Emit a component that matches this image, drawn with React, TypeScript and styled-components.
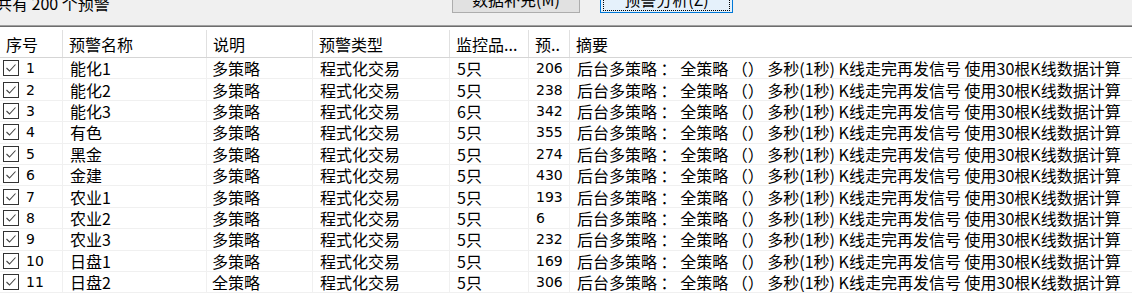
import styled, { createGlobalStyle } from 'styled-components'

const GlobalStyle = createGlobalStyle`
  html, body {
    margin: 0;
    padding: 0;
    background: #f0f0f0;
    overflow: hidden;
  }
  body {
    font-family: "Noto Sans CJK SC", "Liberation Sans", sans-serif;
    font-size: 16px;
    color: #000;
  }
`

const rows = [
  ['1', '能化1', '多策略', '5只', '206'],
  ['2', '能化2', '多策略', '5只', '238'],
  ['3', '能化3', '多策略', '6只', '342'],
  ['4', '有色', '多策略', '5只', '355'],
  ['5', '黑金', '多策略', '5只', '274'],
  ['6', '金建', '多策略', '5只', '430'],
  ['7', '农业1', '多策略', '5只', '193'],
  ['8', '农业2', '多策略', '5只', '6'],
  ['9', '农业3', '多策略', '5只', '232'],
  ['10', '日盘1', '多策略', '5只', '169'],
  ['11', '日盘2', '全策略', '5只', '306'],
]

const summary = '后台多策略 ： 全策略 （） 多秒(1秒) K线走完再发信号 使用30根K线数据计算'

const cols = '63px 144px 106px 137px 79px 41px 1fr'

export default function App() {
  return (
    <Root>
      <GlobalStyle />
      <Toolbar>
        <Count>共有 200 个预警</Count>
        <Button>数据补充(M)</Button>
        <Button $focused>
          <FocusRing>预警分析(Z)</FocusRing>
        </Button>
      </Toolbar>
      <List>
        <Header>
          <HeadCell>序号</HeadCell>
          <HeadCell>预警名称</HeadCell>
          <HeadCell>说明</HeadCell>
          <HeadCell>预警类型</HeadCell>
          <HeadCell>监控品...</HeadCell>
          <HeadCell>预..</HeadCell>
          <HeadCell $last>摘要</HeadCell>
        </Header>
        {rows.map(([no, name, desc, qty, count]) => (
          <Row key={no}>
            <Cell $pad={3}>
              <CheckBox />
              <Num>{no}</Num>
            </Cell>
            <Cell>{name}</Cell>
            <Cell $pad={5}>{desc}</Cell>
            <Cell>程式化交易</Cell>
            <Cell>{qty}</Cell>
            <Cell><Num>{count}</Num></Cell>
            <Cell $last>{summary}</Cell>
          </Row>
        ))}
      </List>
    </Root>
  )
}

function CheckBox() {
  return (
    <svg width="16" height="16" viewBox="0 0 16 16" style={{ flex: 'none' }}>
      <rect x="0.5" y="0.5" width="15" height="15" fill="#fff" stroke="#333" />
      <path d="M3.5 8 L6.5 11 L12.5 4.5" fill="none" stroke="#444" strokeWidth="1.1" />
    </svg>
  )
}

const Root = styled.div`
  width: 1132px;
  height: 294px;
  overflow: hidden;
  display: flex;
  flex-direction: column;
`

const Toolbar = styled.div`
  height: 25px;
  flex: none;
  display: flex;
  align-items: flex-end;
  padding-bottom: 12px;
  box-sizing: border-box;
  background: #f0f0f0;
`

const Count = styled.div`
  width: 452px;
  line-height: 20px;
  margin-bottom: 0;
  white-space: nowrap;
  text-indent: -4px;
`

const Button = styled.div<{ $focused?: boolean }>`
  box-sizing: border-box;
  width: ${p => (p.$focused ? 133 : 128)}px;
  height: 24px;
  margin-right: 20px;
  display: flex;
  align-items: flex-end;
  justify-content: center;
  padding: 2px;
  line-height: 20px;
  background: ${p => (p.$focused ? '#e5f1fb' : '#e1e1e1')};
  border: 1px solid ${p => (p.$focused ? '#0078d7' : '#adadad')};
  padding-bottom: ${p => (p.$focused ? 1 : 3)}px;
  white-space: nowrap;
`

const FocusRing = styled.div`
  flex: 1;
  align-self: stretch;
  display: flex;
  align-items: flex-end;
  justify-content: center;
  border: 1px dotted #000;
  padding-bottom: 1px;
`

const List = styled.div`
  flex: 1;
  background: #fff;
  border-top: 1px solid #a0a0a0;
  box-shadow: inset 0 1px 0 #6d6d6d;
`

const Header = styled.div`
  display: grid;
  grid-template-columns: ${cols};
  height: 32px;
  box-sizing: border-box;
  padding-top: 4px;
  border-bottom: 1px solid #d5d5d5;
`

const HeadCell = styled.div<{ $last?: boolean }>`
  display: flex;
  align-items: center;
  padding-left: 6px;
  border-right: ${p => (p.$last ? 'none' : '1px solid #e0e0e0')};
  white-space: nowrap;
  overflow: hidden;
`

const Row = styled.div`
  display: grid;
  grid-template-columns: ${cols};
  height: 21.4px;
  box-sizing: border-box;
  border-bottom: 1px solid #f0f0f0;
`

const Cell = styled.div<{ $pad?: number; $last?: boolean }>`
  display: flex;
  align-items: center;
  gap: 7px;
  padding-left: ${p => p.$pad ?? 7}px;
  border-right: ${p => (p.$last ? 'none' : '1px solid #f0f0f0')};
  white-space: nowrap;
  overflow: hidden;
  line-height: 18px;
`

const Num = styled.span`
  font-family: "DejaVu Sans", "Liberation Sans", sans-serif;
  font-size: 14px;
`
